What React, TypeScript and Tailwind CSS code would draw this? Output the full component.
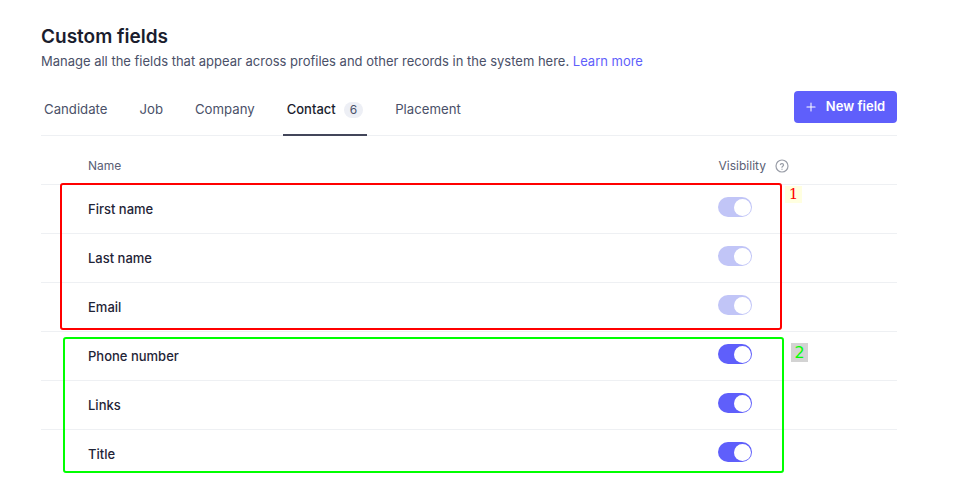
import React from 'react';
import { Plus } from 'lucide-react';

const tabs = ['Candidate', 'Job', 'Company', 'Contact', 'Placement'];

const rows = [
  { name: 'First name', locked: true },
  { name: 'Last name', locked: true },
  { name: 'Email', locked: true },
  { name: 'Phone number', locked: false },
  { name: 'Links', locked: false },
  { name: 'Title', locked: false },
];

function Toggle({ locked }: { locked: boolean }) {
  return (
    <div className={`flex h-5 w-[34px] items-center justify-end rounded-full pr-px ${locked ? 'bg-[#c1c5f7]' : 'bg-[#5f5ffb]'}`}>
      <div className="h-[17px] w-[17px] rounded-full bg-white" />
    </div>
  );
}

export default function App() {
  return (
    <div className="relative h-[490px] w-[964px] overflow-hidden bg-white font-['Inter',sans-serif]">
      <div className="ml-[41px] w-[856px] pt-[25px]">
        <h1 className="text-[19px] font-semibold leading-[23px] text-[#1a1d2e]">Custom fields</h1>
        <p className="mt-[3px] text-[12.99px] leading-[20px] text-[#4a5068]">
          Manage all the fields that appear across profiles and other records in the system here.{' '}
          <span className="text-[#5f5ffb]">Learn more</span>
        </p>

        <div className="mt-[9px] flex h-[56px] items-end justify-between border-b border-[#eef0f3]">
          <div className="-ml-px flex h-[50px] gap-6">
            {tabs.map(tab => (
              <div
                key={tab}
                className={`-mb-px flex items-center gap-2 border-b-2 px-1 ${
                  tab === 'Contact' ? 'border-[#43465a] text-[13px] font-medium text-[#1a1d2e]' : 'border-transparent text-[13.2px] text-[#4a5068]'
                }`}
              >
                {tab}
                {tab === 'Contact' && (
                  <span className="rounded-full bg-[#edeff5] px-[6px] text-[12px] font-normal leading-[16px] text-[#4a5068]">6</span>
                )}
              </div>
            ))}
          </div>
          <button className="mb-3 flex h-8 w-[103px] items-center justify-center gap-2 rounded bg-[#5f5ffb] pr-0.5 text-[13px] font-semibold text-white">
            <Plus className="h-[14px] w-[14px]" strokeWidth={1.75} />
            New field
          </button>
        </div>

        <div className="flex h-[49px] items-center justify-between border-b border-[#eef0f3] pl-[47px] pr-[108px] pt-[12px] text-[12px] text-[#5a6075]">
          <span>Name</span>
          <span className="flex items-center gap-[9px]">
            Visibility
            <svg width="14" height="14" viewBox="0 0 14 14" fill="none" stroke="#9a9ea8" strokeWidth="1.2" strokeLinecap="round">
              <circle cx="7" cy="7" r="6" />
              <path d="M5.4 5.5a1.7 1.7 0 0 1 3.2.5c0 1.1-1.6 1.3-1.6 2.3" />
              <path d="M7 10.2v.1" />
            </svg>
          </span>
        </div>

        {rows.map((row, i) => (
          <div
            key={row.name}
            className={`flex h-[49px] justify-between pl-[47px] pr-[145px] ${i < rows.length - 1 ? 'border-b border-[#eef0f3]' : ''}`}
          >
            <span className="pt-[16px] text-[13px] font-[450] leading-[16px] text-[#1f2437]">{row.name}</span>
            <div className="pt-[12px]">
              <Toggle locked={row.locked} />
            </div>
          </div>
        ))}
      </div>

      <div className="absolute left-[60px] top-[183px] h-[147px] w-[722px] rounded-[3px] border-2 border-[#ff0000]" />
      <div className="absolute left-[63px] top-[337px] h-[136px] w-[721px] rounded-[3px] border-2 border-[#00ff00]" />
      <span className="absolute left-[785px] top-[186px] h-[17px] w-[17px] bg-[#ffffe0] text-center font-['DejaVu_Serif',serif] text-[15px] leading-[17px] text-[#ff0000]">1</span>
      <span className="absolute left-[791px] top-[343px] h-[19px] w-[17px] bg-[#d3d3d3] text-center font-['DejaVu_Sans',sans-serif] text-[16px] leading-[19px] text-[#00ff00]">2</span>
    </div>
  );
}
